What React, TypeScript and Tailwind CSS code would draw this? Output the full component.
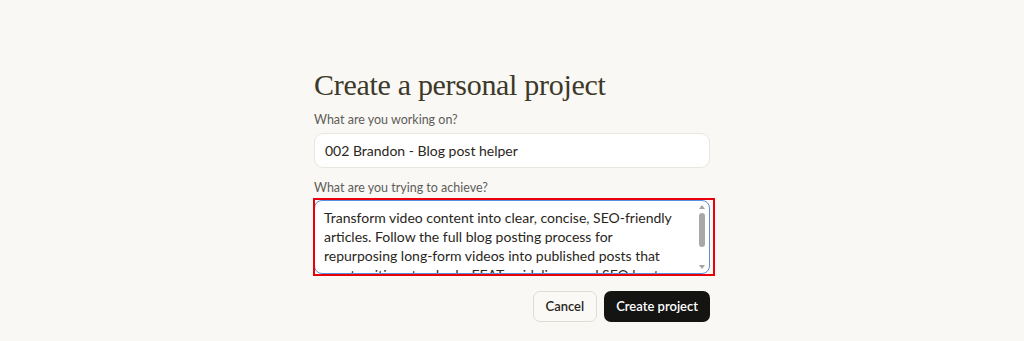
import React from "react";

export default function App() {
  const desc =
    "Transform video content into clear, concise, SEO-friendly articles. Follow the full blog posting process for repurposing long-form videos into published posts that meet writing standards, EEAT guidelines, and SEO best practices. Keep the tone natural and readable for every audience.";
  return (
    <div
      className="min-h-[341px] w-full bg-[#f9f8f5] flex justify-center"
      style={{ fontFamily: "Lato, sans-serif" }}
    >
      <div className="w-[396px] pt-[66px] flex flex-col">
        <h1
          className="text-[30px] leading-[38px] text-[#3d3929] tracking-[-0.3px]"
          style={{ fontFamily: "'Liberation Serif', serif" }}
        >
          Create a personal project
        </h1>
        <label className="mt-[7px] text-[12.5px] leading-[18px] text-[#5e5d59]">
          What are you working on?
        </label>
        <div className="mt-[4px] h-[35px] rounded-[9px] border border-[#e8e6df] bg-white flex items-center px-[10px] text-[14px] text-[#29261b]">
          002 Brandon - Blog post helper
        </div>
        <label className="mt-[11px] text-[12.5px] leading-[18px] text-[#5e5d59]">
          What are you trying to achieve?
        </label>
        <div className="relative mt-[3px]">
          <div className="relative h-[74px] rounded-[8px] border border-[#5b8fdc] bg-white overflow-hidden">
            <textarea
              readOnly
              defaultValue={desc}
              className="block w-full h-full resize-none bg-transparent pl-[9px] pr-[32px] pt-[7px] text-[14px] leading-[19px] text-[#29261b] outline-none overflow-hidden"
              style={{ fontFamily: "Lato, sans-serif" }}
            />
            <div className="absolute right-[2px] top-[2px] bottom-[2px] w-[10px] flex flex-col items-center">
              <svg width="8" height="6" viewBox="0 0 8 6" className="mt-[1px]">
                <path d="M4 1 L7 5 L1 5 Z" fill="#a3a3a3" />
              </svg>
              <div className="mt-[3px] h-[34px] w-[6px] rounded-full bg-[#a8a8a8]" />
              <div className="flex-1" />
              <svg width="8" height="6" viewBox="0 0 8 6" className="mb-[1px]">
                <path d="M1 1 L7 1 L4 5 Z" fill="#a3a3a3" />
              </svg>
            </div>
          </div>
          <div className="absolute -left-[1px] -top-[2px] -right-[5px] -bottom-[2px] border-2 border-[#e8000b] pointer-events-none" />
        </div>
        <div className="mt-[17px] flex justify-end gap-[7px]">
          <button className="h-[31px] px-[12px] rounded-[7px] border border-[#dedcd5] bg-[#faf9f6] text-[13px] font-semibold text-[#29261b]">
            Cancel
          </button>
          <button className="h-[31px] px-[12px] rounded-[7px] bg-[#141413] text-[13px] font-semibold text-white">
            Create project
          </button>
        </div>
      </div>
    </div>
  );
}
